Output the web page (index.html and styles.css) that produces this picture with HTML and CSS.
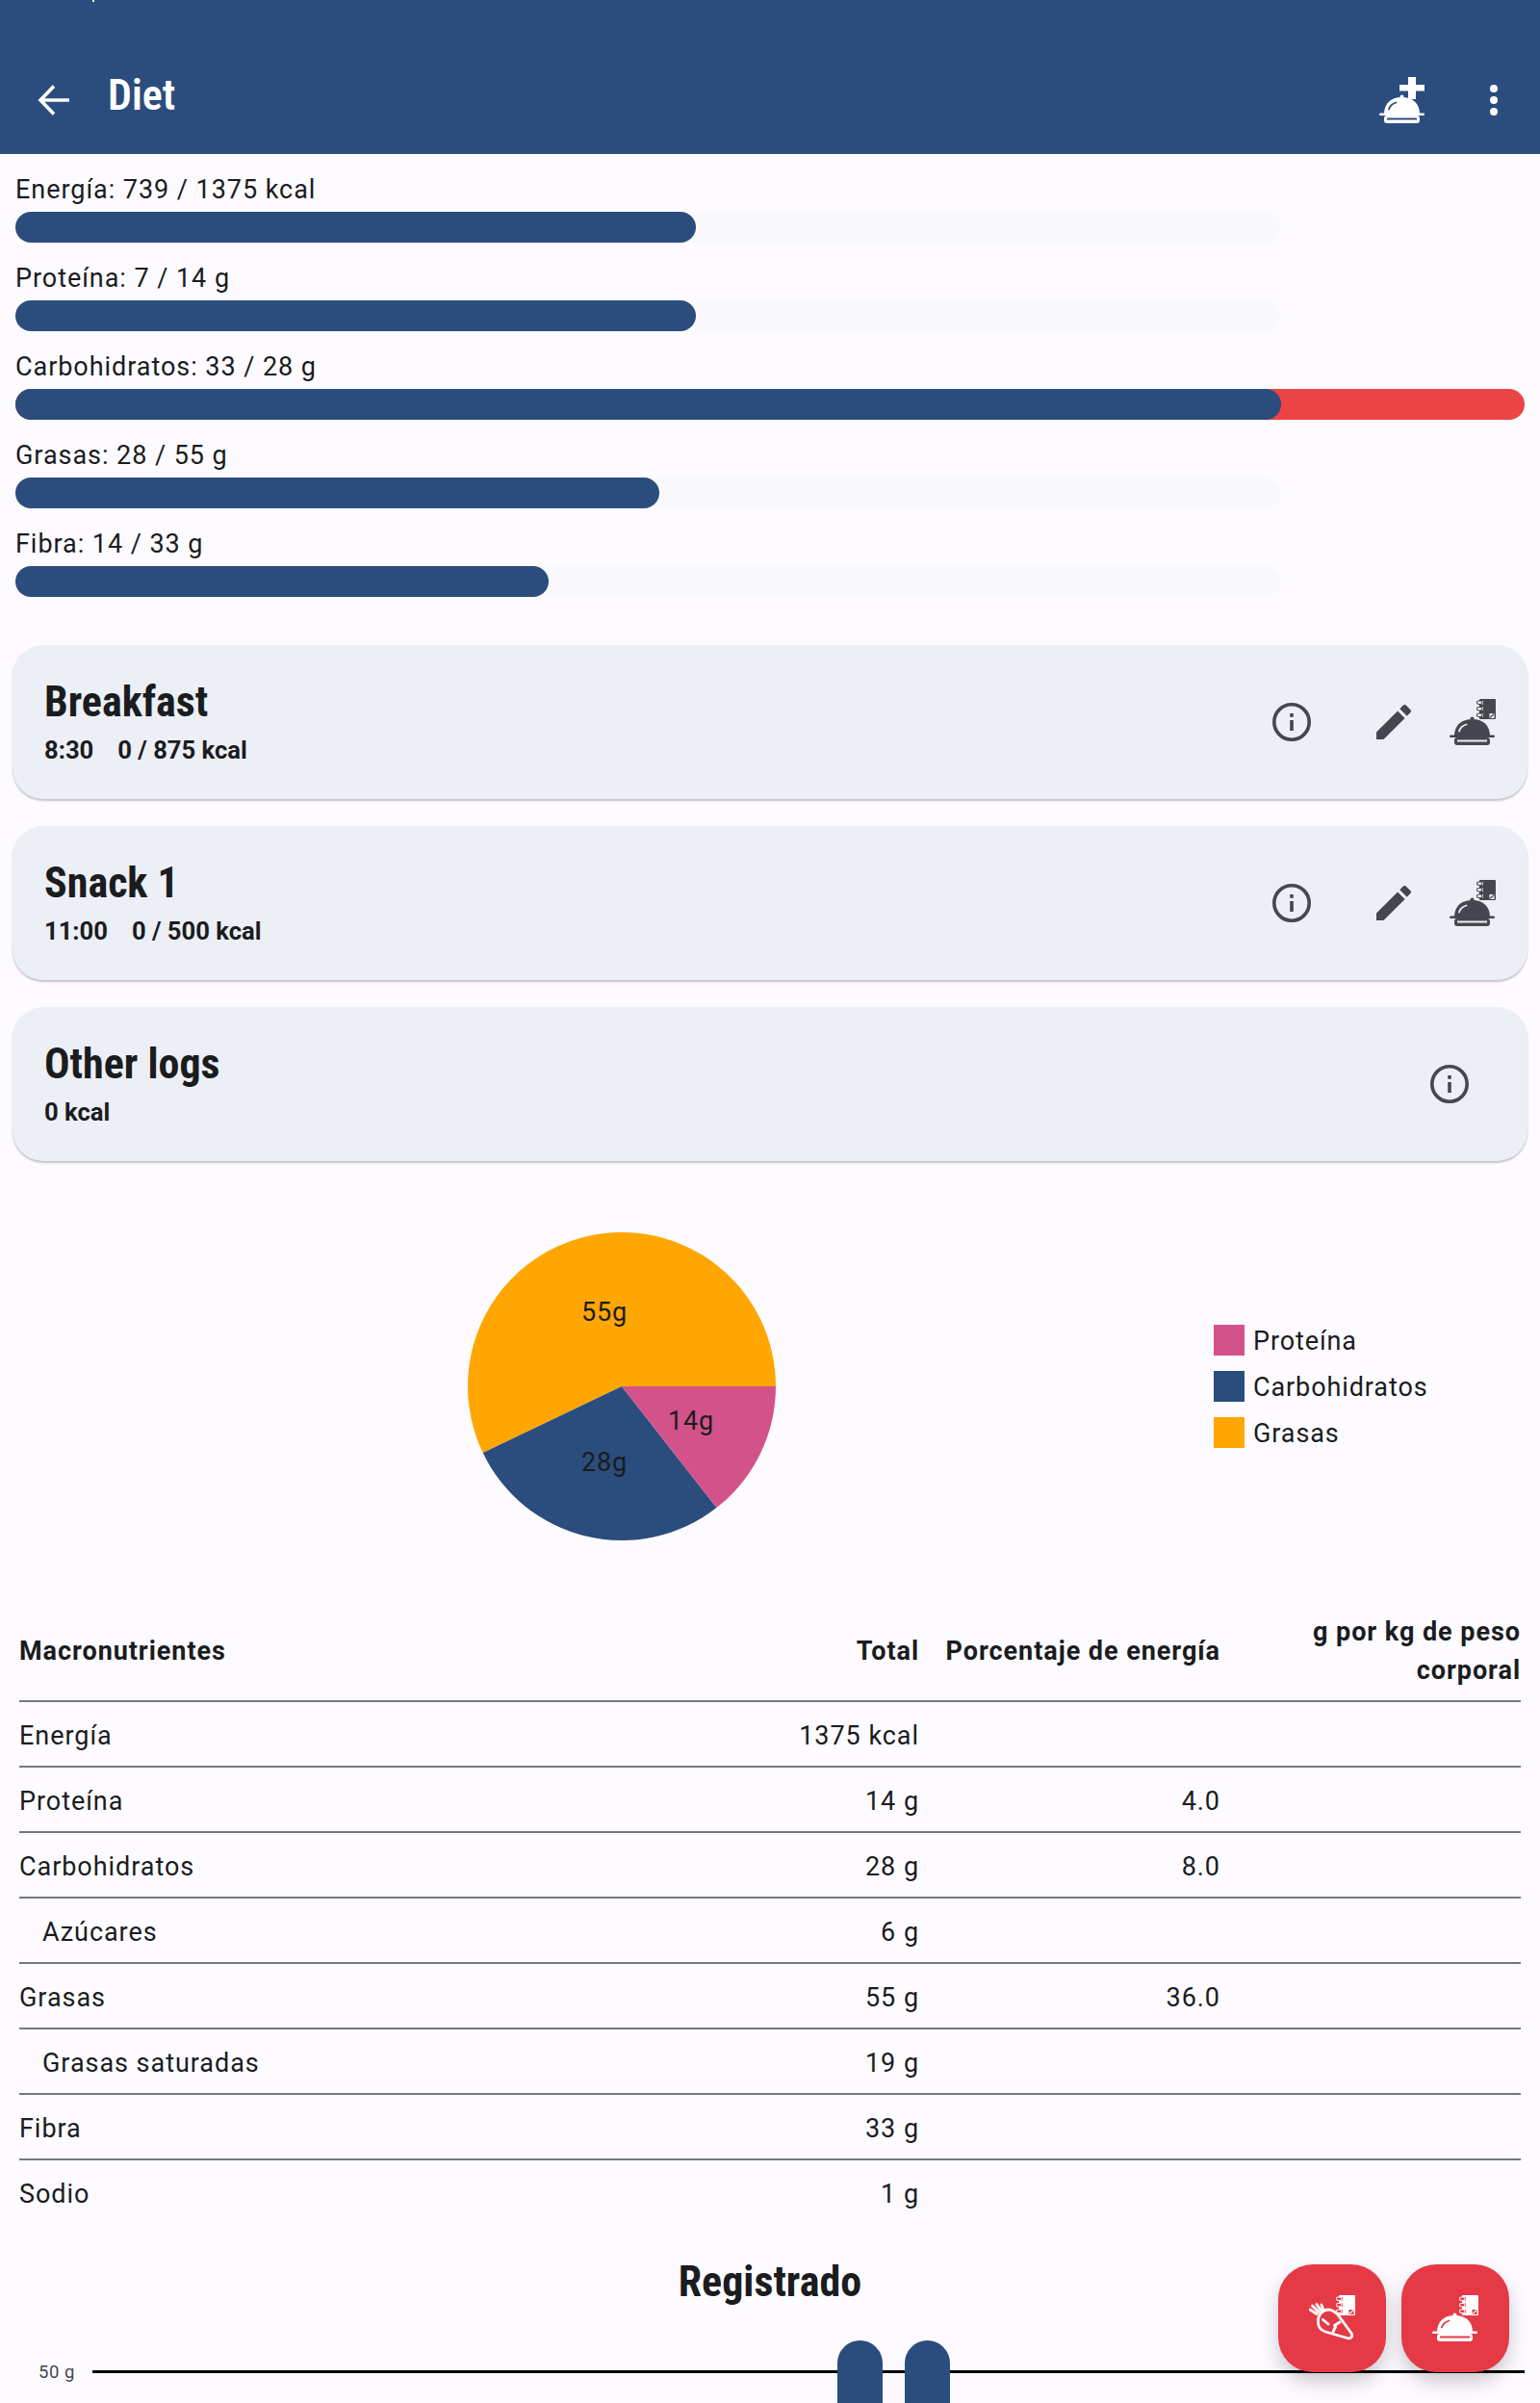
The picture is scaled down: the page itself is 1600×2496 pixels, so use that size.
FILE: index.html
```html
<!DOCTYPE html>
<html lang="es">
<head>
    <meta charset="UTF-8">
    <meta name="viewport" content="width=device-width, initial-scale=1.0">
    <title>Diet</title>
    <link rel="stylesheet" href="styles.css">
</head>
<body>
    <svg class="sprites" width="0" height="0">
        <symbol id="cloche" viewBox="0 0 48 48">
            <circle cx="23.5" cy="20.500" r="2"/>
            <path d="M5 38.500C5 27 12.500 21 23.500 21S42 27 42 38.500Z"/>
            <path class="cut" d="M10 33.500C11 30 14 27.500 17.500 26.500"/>
            <rect x="0" y="37.500" width="47" height="2.500" rx="1.250"/>
            <rect x="5" y="40" width="37" height="8" rx="3"/>
            <rect class="cut-fill" x="8" y="42.500" width="31" height="2"/>
        </symbol>
        <symbol id="notebook" viewBox="0 0 48 48">
            <rect x="31" y="0" width="17" height="21" rx="1"/>
            <rect class="cut-fill" x="29" y="2" width="6" height="3.500"/>
            <rect class="cut-fill" x="29" y="8.500" width="6" height="3.500"/>
            <rect class="cut-fill" x="29" y="15" width="6" height="3.500"/>
            <rect class="ring" x="28.500" y="2" width="5.500" height="3.500" rx="1.700"/>
            <rect class="ring" x="28.500" y="8.500" width="5.500" height="3.500" rx="1.700"/>
            <rect class="ring" x="28.500" y="15" width="5.500" height="3.500" rx="1.700"/>
            <rect class="cut-fill" x="41.500" y="15" width="5" height="5"/>
            <path class="ring" d="M42 19.500L46 15.500"/>
        </symbol>
        <symbol id="info" viewBox="0 0 40 40">
            <circle class="ring-thick" cx="20" cy="20" r="18.200"/>
            <rect x="18.200" y="18" width="3.600" height="11"/>
            <rect x="18.200" y="11" width="3.600" height="3.800"/>
        </symbol>
        <symbol id="pencil" viewBox="3 3 18 18">
            <path d="M3 17.250V21h3.750L17.810 9.940l-3.750-3.750L3 17.250z"/>
            <path d="M20.710 7.040c.39-.39.39-1.020 0-1.410l-2.340-2.340c-.39-.39-1.020-.39-1.410 0l-1.830 1.830 3.750 3.750 1.830-1.830z"/>
        </symbol>
    </svg>

    <header class="app-bar">
        <span class="status-mark"></span>
        <svg class="back-icon" viewBox="0 0 32 32" width="32" height="32">
            <path d="M32 16H2M16 1.500L2 16L16 30.500"/>
        </svg>
        <h1 class="app-title">Diet</h1>
        <svg class="add-meal" viewBox="0 0 48 48" width="48" height="48">
            <use href="#cloche"/>
            <rect x="21" y="8" width="26" height="6.500"/>
            <rect x="30" y="0" width="8" height="23"/>
        </svg>
        <div class="more-dots"><i></i><i></i><i></i></div>
    </header>

    <section class="goals">
        <div class="goal">
            <div class="goal-label">Energía: 739 / 1375 kcal</div>
            <div class="bar"><div class="track"></div><div class="fill" style="width:707px"></div></div>
        </div>
        <div class="goal">
            <div class="goal-label">Proteína: 7 / 14 g</div>
            <div class="bar"><div class="track"></div><div class="fill" style="width:707px"></div></div>
        </div>
        <div class="goal">
            <div class="goal-label">Carbohidratos: 33 / 28 g</div>
            <div class="bar"><div class="over"></div><div class="fill" style="width:1315px"></div></div>
        </div>
        <div class="goal">
            <div class="goal-label">Grasas: 28 / 55 g</div>
            <div class="bar"><div class="track"></div><div class="fill" style="width:669px"></div></div>
        </div>
        <div class="goal">
            <div class="goal-label">Fibra: 14 / 33 g</div>
            <div class="bar"><div class="track"></div><div class="fill" style="width:554px"></div></div>
        </div>
    </section>

    <section class="meals">
        <article class="meal-card">
            <div class="meal-text">
                <h2 class="condensed meal-title">Breakfast</h2>
                <p class="meal-sub"><span>8:30</span><span>0 / 875 kcal</span></p>
            </div>
            <svg class="icon info-icon"><use href="#info"/></svg>
            <svg class="icon pencil-icon"><use href="#pencil"/></svg>
            <svg class="icon log-icon"><use href="#cloche"/><use href="#notebook"/></svg>
        </article>
        <article class="meal-card">
            <div class="meal-text">
                <h2 class="condensed meal-title">Snack 1</h2>
                <p class="meal-sub"><span>11:00</span><span>0 / 500 kcal</span></p>
            </div>
            <svg class="icon info-icon"><use href="#info"/></svg>
            <svg class="icon pencil-icon"><use href="#pencil"/></svg>
            <svg class="icon log-icon"><use href="#cloche"/><use href="#notebook"/></svg>
        </article>
        <article class="meal-card">
            <div class="meal-text">
                <h2 class="condensed meal-title">Other logs</h2>
                <p class="meal-sub"><span>0 kcal</span></p>
            </div>
            <svg class="icon info-icon info-only"><use href="#info"/></svg>
        </article>
    </section>

    <section class="macros">
        <svg class="pie" viewBox="0 0 320 320" width="320" height="320">
            <path class="slice-fat" d="M160 160L15.700 229.100A160 160 0 1 1 320 160Z"/>
            <path class="slice-carb" d="M160 160L258.500 286.100A160 160 0 0 1 15.700 229.100Z"/>
            <path class="slice-protein" d="M160 160L320 160A160 160 0 0 1 258.500 286.100Z"/>
            <text x="142" y="83">55g</text>
            <text x="232" y="196">14g</text>
            <text x="142" y="239">28g</text>
        </svg>
        <ul class="legend">
            <li><span class="swatch swatch-protein"></span><span class="legend-text">Proteína</span></li>
            <li><span class="swatch swatch-carb"></span><span class="legend-text">Carbohidratos</span></li>
            <li><span class="swatch swatch-fat"></span><span class="legend-text">Grasas</span></li>
        </ul>
    </section>

    <table class="nutri-table">
        <colgroup>
            <col class="col-name"><col class="col-total"><col class="col-pct"><col class="col-kg">
        </colgroup>
        <thead>
            <tr><th>Macronutrientes</th><th>Total</th><th>Porcentaje de energía</th><th>g por kg de peso corporal</th></tr>
        </thead>
        <tbody>
            <tr><td>Energía</td><td>1375 kcal</td><td></td><td></td></tr>
            <tr><td>Proteína</td><td>14 g</td><td>4.0</td><td></td></tr>
            <tr><td>Carbohidratos</td><td>28 g</td><td>8.0</td><td></td></tr>
            <tr><td class="sub-row">Azúcares</td><td>6 g</td><td></td><td></td></tr>
            <tr><td>Grasas</td><td>55 g</td><td>36.0</td><td></td></tr>
            <tr><td class="sub-row">Grasas saturadas</td><td>19 g</td><td></td><td></td></tr>
            <tr><td>Fibra</td><td>33 g</td><td></td><td></td></tr>
            <tr><td>Sodio</td><td>1 g</td><td></td><td></td></tr>
        </tbody>
    </table>

    <h2 class="condensed chart-title">Registrado</h2>
    <div class="chart">
        <span class="chart-label">50 g</span>
        <div class="chart-line"></div>
        <div class="chart-bar"></div>
        <div class="chart-bar"></div>
    </div>

    <div class="fabs">
        <button class="fab">
            <svg viewBox="0 0 48 48" width="48" height="48">
                <use href="#notebook"/>
                <g class="carrot">
                    <path d="M9.500 26C10 18 17 13.500 23 15.500C27 17 30 20 32 23L44 39.500C46 43 43 46 39.500 44.500L17 38C11 36 9 31 9.500 26Z"/>
                    <path d="M32 28L26.500 31.500M25 38L27.500 33M14.500 25.500L20 30M1 15L8 19.500M3.500 11L10 17.500M8 9.500L12 15.500M13 10L14.500 14.500"/>
                </g>
            </svg>
        </button>
        <button class="fab">
            <svg viewBox="0 0 48 48" width="48" height="48"><use href="#cloche"/><use href="#notebook"/></svg>
        </button>
    </div>
</body>
</html>
```

FILE: styles.css
```css
body {
    --blue: #2b4d7e;
    --ink: #1a1c1e;
    --cut: #eceff6;
    position: relative;
    width: 1600px;
    height: 2496px;
    margin: 0;
    overflow: hidden;
    background-color: #fdfbff;
    color: var(--ink);
    font-family: Roboto, "Liberation Sans", sans-serif;
    font-size: 25.6px;
}
h1, h2, p, ul {
    margin: 0;
    padding: 0;
}
.sprites {
    position: absolute;
}
.cut {
    fill: none;
    stroke: var(--cut);
    stroke-width: 1.800;
    stroke-linecap: round;
}
.cut-fill {
    fill: var(--cut);
}
.ring {
    fill: none;
    stroke: currentColor;
    stroke-width: 1.100;
}
.ring-thick {
    fill: none;
    stroke: currentColor;
    stroke-width: 3.600;
}
.condensed {
    font-stretch: 75%;
    font-weight: 700;
    font-size: 44px;
}

/* app bar */
.app-bar {
    --cut: var(--blue);
    position: relative;
    display: flex;
    align-items: center;
    box-sizing: border-box;
    height: 160px;
    padding: 48px 32px 0 40px;
    background-color: var(--blue);
    color: white;
}
.status-mark {
    position: absolute;
    left: 96px;
    top: 0;
    width: 2px;
    height: 2px;
    background-color: white;
}
.back-icon {
    fill: none;
    stroke: white;
    stroke-width: 3.600;
    overflow: visible;
}
.app-title {
    margin: -11px auto 0 40px;
    font-size: 44px;
    font-stretch: 75%;
    font-weight: 600;
}
.add-meal {
    fill: white;
}
.more-dots {
    display: flex;
    flex-direction: column;
    gap: 4px;
    margin-left: 67px;
    margin-right: 12px;
}
.more-dots i {
    width: 8px;
    height: 8px;
    border-radius: 50%;
    background-color: white;
}

/* goal bars */
.goals {
    display: flex;
    flex-direction: column;
    gap: 24px;
    padding: 24px 16px 0;
}
.goal-label {
    height: 24px;
    margin-bottom: 12px;
    font-size: 27px;
    letter-spacing: 0.95px;
    line-height: 26px;
}
.bar {
    display: grid;
    height: 32px;
}
.bar > div {
    grid-area: 1 / 1;
    height: 32px;
    border-radius: 16px;
}
.track {
    width: 1315px;
    background-color: #f9f9fd;
}
.fill {
    background-color: var(--blue);
}
.over {
    background-color: #ec4444;
}

/* meal cards */
.meals {
    display: flex;
    flex-direction: column;
    gap: 28px;
    padding: 50px 13px 0;
}
.meal-card {
    display: flex;
    align-items: center;
    box-sizing: border-box;
    height: 160px;
    padding: 0 33px;
    border-radius: 32px;
    background-color: var(--cut);
    box-shadow: 0 2px 2px rgba(0, 0, 0, 0.22);
}
.meal-text {
    margin-right: auto;
}
.meal-title {
    line-height: 53px;
}
.meal-sub {
    display: flex;
    gap: 25px;
    margin-top: 5px;
    font-size: 25.6px;
    font-stretch: 95%;
    font-weight: 700;
    line-height: 36px;
}
.icon {
    fill: #44474f;
    color: #44474f;
}
.info-icon {
    width: 40px;
    height: 40px;
}
.pencil-icon {
    width: 36px;
    height: 36px;
    margin-left: 68px;
}
.log-icon {
    width: 48px;
    height: 48px;
    margin-left: 40px;
}
.info-only {
    margin-right: 28px;
}

/* macro pie */
.macros {
    display: flex;
    align-items: center;
    box-sizing: border-box;
    height: 458px;
    padding: 74px 0 64px 486px;
}
.pie text {
    fill: var(--ink);
    font-size: 27px;
    letter-spacing: 0.8px;
    text-anchor: middle;
    dominant-baseline: central;
}
.slice-fat, .swatch-fat {
    fill: #ffa600;
    background-color: #ffa600;
}
.slice-carb, .swatch-carb {
    fill: var(--blue);
    background-color: var(--blue);
}
.slice-protein, .swatch-protein {
    fill: #d4528a;
    background-color: #d4528a;
}
.legend {
    display: flex;
    flex-direction: column;
    gap: 16px;
    margin-left: 455px;
    list-style: none;
    letter-spacing: 0.9px;
}
.legend li {
    display: flex;
    align-items: center;
    gap: 9px;
    height: 32px;
    font-size: 27px;
}
.legend-text {
    padding-top: 1px;
}
.swatch {
    width: 32px;
    height: 32px;
}

/* nutrition table */
.nutri-table {
    width: 1560px;
    margin-left: 20px;
    border-collapse: collapse;
    table-layout: fixed;
    font-size: 27px;
    letter-spacing: 0.95px;
}
.col-name { width: 700px; }
.col-total { width: 235px; }
.col-pct { width: 313px; }
.col-kg { width: 312px; }
.nutri-table th {
    height: 102px;
    padding: 0 0 0 26px;
    border-bottom: 2px solid #74777f;
    font-weight: 700;
    line-height: 40px;
    text-align: right;
}
.nutri-table td {
    height: 63px;
    padding: 3px 0 0 26px;
    border-bottom: 2px solid #74777f;
    text-align: right;
}
.nutri-table tr:last-child td {
    border-bottom: none;
}
.nutri-table th:first-child, .nutri-table td:first-child {
    padding-left: 0;
    text-align: left;
}
.nutri-table td.sub-row {
    padding-left: 24px;
}

/* logged chart */
.chart-title {
    height: 121px;
    line-height: 120px;
    text-align: center;
}
.chart {
    position: relative;
    display: flex;
    gap: 23px;
    padding-left: 870px;
}
.chart-label {
    position: absolute;
    left: 40px;
    top: 22px;
    font-size: 18.500px;
    letter-spacing: 0.5px;
    color: #44474f;
}
.chart-line {
    position: absolute;
    left: 96px;
    right: 16px;
    top: 31px;
    height: 3px;
    background-color: black;
}
.chart-bar {
    position: relative;
    width: 47px;
    height: 70px;
    border-radius: 24px 24px 0 0;
    background-color: var(--blue);
}

/* floating buttons */
.fabs {
    --cut: #e63946;
    position: absolute;
    right: 32px;
    bottom: 32px;
    display: flex;
    gap: 16px;
}
.fab {
    display: flex;
    align-items: center;
    justify-content: center;
    width: 112px;
    height: 112px;
    padding: 0;
    border: none;
    border-radius: 36px;
    background-color: var(--cut);
    box-shadow: 0 10px 20px rgba(0, 0, 0, 0.2);
    color: white;
    fill: white;
}
.carrot path {
    fill: none;
    stroke: white;
    stroke-width: 2.800;
    stroke-linecap: round;
    stroke-linejoin: round;
}
```
